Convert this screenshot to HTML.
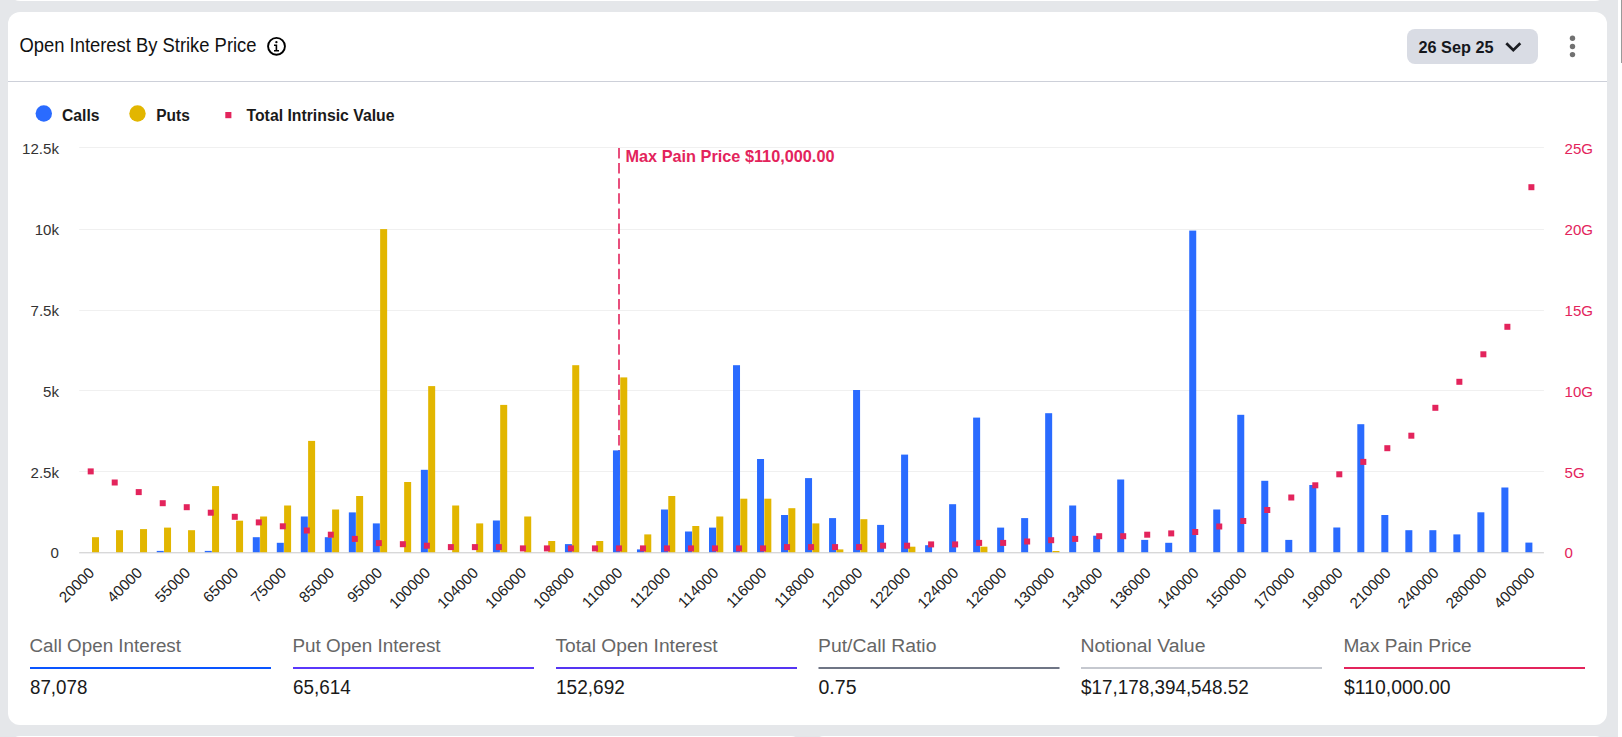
<!DOCTYPE html>
<html><head><meta charset="utf-8"><style>
html,body{margin:0;padding:0;width:1622px;height:737px;overflow:hidden;background:#e5e7ea;font-family:"Liberation Sans", sans-serif;}
.card{position:absolute;background:#fff;border-radius:12px;}
svg{position:absolute;left:0;top:0;}
</style></head><body>
<div class="card" style="left:8px;top:-40px;width:1599px;height:40.7px;"></div>
<div class="card" style="left:8px;top:11.5px;width:1599px;height:713px;"></div>
<div class="card" style="left:8px;top:735.6px;width:795px;height:60px;"></div>
<div class="card" style="left:812px;top:735.6px;width:795px;height:60px;"></div>
<div style="position:absolute;left:1618px;top:0;width:4px;height:737px;background:#fff;"></div>
<div style="position:absolute;left:1621px;top:0;width:1px;height:63px;background:#9a9a9a;"></div>
<svg width="1622" height="737" viewBox="0 0 1622 737">
<text x="19.5" y="51.8" font-family='"Liberation Sans", sans-serif' font-size="20" fill="#111" textLength="237" lengthAdjust="spacingAndGlyphs">Open Interest By Strike Price</text>
<circle cx="276.5" cy="46.3" r="8.45" fill="none" stroke="#000" stroke-width="1.9"/>
<circle cx="276.4" cy="42.2" r="1.15" fill="#000"/>
<path d="M274 45.3 H276.4 M276.4 44.6 V51 M274 50.8 H279" stroke="#000" stroke-width="1.6" fill="none"/>
<rect x="1407" y="29" width="131" height="35" rx="8" fill="#d9dce4"/>
<text x="1418.5" y="53" font-family='"Liberation Sans", sans-serif' font-weight="bold" font-size="16.7" fill="#15171c" textLength="75" lengthAdjust="spacingAndGlyphs">26 Sep 25</text>
<path d="M1506.3 43.2 L1513.3 50.2 L1520.3 43.2" stroke="#1b1d22" stroke-width="2.7" fill="none"/>
<circle cx="1572.5" cy="38.3" r="2.7" fill="#717171"/>
<circle cx="1572.5" cy="46.5" r="2.7" fill="#717171"/>
<circle cx="1572.5" cy="54.6" r="2.7" fill="#717171"/>
<rect x="8" y="81" width="1599" height="1" fill="#cdd0d9"/>
<circle cx="43.8" cy="113.5" r="8.2" fill="#2a6bff"/>
<text x="62" y="120.8" font-family='"Liberation Sans", sans-serif' font-weight="bold" font-size="17.2" fill="#1a1a1a" textLength="37.5" lengthAdjust="spacingAndGlyphs">Calls</text>
<circle cx="137.5" cy="113.5" r="8.2" fill="#e2b600"/>
<text x="156.3" y="120.8" font-family='"Liberation Sans", sans-serif' font-weight="bold" font-size="17.2" fill="#1a1a1a" textLength="33.5" lengthAdjust="spacingAndGlyphs">Puts</text>
<rect x="225.3" y="112" width="6.1" height="6.2" fill="#e3245c"/>
<text x="246.5" y="120.8" font-family='"Liberation Sans", sans-serif' font-weight="bold" font-size="17.2" fill="#1a1a1a" textLength="148" lengthAdjust="spacingAndGlyphs">Total Intrinsic Value</text>
<rect x="79.2" y="147" width="1464.7" height="1" fill="#f0f0f0"/>
<rect x="79.2" y="229" width="1464.7" height="1" fill="#f0f0f0"/>
<rect x="79.2" y="310" width="1464.7" height="1" fill="#f0f0f0"/>
<rect x="79.2" y="390" width="1464.7" height="1" fill="#f0f0f0"/>
<rect x="79.2" y="471" width="1464.7" height="1" fill="#f0f0f0"/>
<rect x="79.2" y="552" width="1464.7" height="1" fill="#d8d8d8"/>
<rect x="79.2" y="553" width="1464.7" height="1" fill="#efeff1"/>
<line x1="619" y1="148" x2="619" y2="552" stroke="#e3245c" stroke-width="1.6" stroke-dasharray="10.5 4.6"/>
<rect x="156.74" y="550.9" width="7.0" height="1.3" fill="#2a6bff"/>
<rect x="204.76" y="550.9" width="7.0" height="1.3" fill="#2a6bff"/>
<rect x="252.79" y="537.2" width="7.0" height="15.0" fill="#2a6bff"/>
<rect x="276.80" y="542.8" width="7.0" height="9.4" fill="#2a6bff"/>
<rect x="300.81" y="516.5" width="7.0" height="35.7" fill="#2a6bff"/>
<rect x="324.82" y="537.2" width="7.0" height="15.0" fill="#2a6bff"/>
<rect x="348.83" y="512.4" width="7.0" height="39.8" fill="#2a6bff"/>
<rect x="372.84" y="523.4" width="7.0" height="28.8" fill="#2a6bff"/>
<rect x="420.87" y="469.8" width="7.0" height="82.4" fill="#2a6bff"/>
<rect x="492.90" y="520.5" width="7.0" height="31.7" fill="#2a6bff"/>
<rect x="564.94" y="544.1" width="7.0" height="8.1" fill="#2a6bff"/>
<rect x="612.96" y="450.4" width="7.0" height="101.8" fill="#2a6bff"/>
<rect x="636.97" y="549.4" width="7.0" height="2.8" fill="#2a6bff"/>
<rect x="660.98" y="509.5" width="7.0" height="42.7" fill="#2a6bff"/>
<rect x="684.99" y="531.5" width="7.0" height="20.7" fill="#2a6bff"/>
<rect x="709.00" y="527.6" width="7.0" height="24.6" fill="#2a6bff"/>
<rect x="733.02" y="365.2" width="7.0" height="187.0" fill="#2a6bff"/>
<rect x="757.03" y="459.0" width="7.0" height="93.2" fill="#2a6bff"/>
<rect x="781.04" y="515.0" width="7.0" height="37.2" fill="#2a6bff"/>
<rect x="805.05" y="478.1" width="7.0" height="74.1" fill="#2a6bff"/>
<rect x="829.06" y="518.1" width="7.0" height="34.1" fill="#2a6bff"/>
<rect x="853.07" y="390.0" width="7.0" height="162.2" fill="#2a6bff"/>
<rect x="877.08" y="524.9" width="7.0" height="27.3" fill="#2a6bff"/>
<rect x="901.10" y="454.6" width="7.0" height="97.6" fill="#2a6bff"/>
<rect x="925.11" y="545.2" width="7.0" height="7.0" fill="#2a6bff"/>
<rect x="949.12" y="504.2" width="7.0" height="48.0" fill="#2a6bff"/>
<rect x="973.13" y="417.6" width="7.0" height="134.6" fill="#2a6bff"/>
<rect x="997.14" y="527.6" width="7.0" height="24.6" fill="#2a6bff"/>
<rect x="1021.15" y="518.1" width="7.0" height="34.1" fill="#2a6bff"/>
<rect x="1045.16" y="413.2" width="7.0" height="139.0" fill="#2a6bff"/>
<rect x="1069.18" y="505.5" width="7.0" height="46.7" fill="#2a6bff"/>
<rect x="1093.19" y="535.7" width="7.0" height="16.5" fill="#2a6bff"/>
<rect x="1117.20" y="479.5" width="7.0" height="72.7" fill="#2a6bff"/>
<rect x="1141.21" y="539.9" width="7.0" height="12.3" fill="#2a6bff"/>
<rect x="1165.22" y="542.8" width="7.0" height="9.4" fill="#2a6bff"/>
<rect x="1189.23" y="230.6" width="7.0" height="321.6" fill="#2a6bff"/>
<rect x="1213.25" y="509.5" width="7.0" height="42.7" fill="#2a6bff"/>
<rect x="1237.26" y="414.8" width="7.0" height="137.4" fill="#2a6bff"/>
<rect x="1261.27" y="480.8" width="7.0" height="71.4" fill="#2a6bff"/>
<rect x="1285.28" y="539.9" width="7.0" height="12.3" fill="#2a6bff"/>
<rect x="1309.29" y="485.0" width="7.0" height="67.2" fill="#2a6bff"/>
<rect x="1333.30" y="527.5" width="7.0" height="24.7" fill="#2a6bff"/>
<rect x="1357.31" y="424.2" width="7.0" height="128.0" fill="#2a6bff"/>
<rect x="1381.33" y="515.0" width="7.0" height="37.2" fill="#2a6bff"/>
<rect x="1405.34" y="530.2" width="7.0" height="22.0" fill="#2a6bff"/>
<rect x="1429.35" y="530.2" width="7.0" height="22.0" fill="#2a6bff"/>
<rect x="1453.36" y="534.4" width="7.0" height="17.8" fill="#2a6bff"/>
<rect x="1477.37" y="512.3" width="7.0" height="39.9" fill="#2a6bff"/>
<rect x="1501.38" y="487.5" width="7.0" height="64.7" fill="#2a6bff"/>
<rect x="1525.39" y="542.6" width="7.0" height="9.6" fill="#2a6bff"/>
<rect x="92.01" y="537.2" width="7.0" height="15.0" fill="#e2b600"/>
<rect x="116.02" y="530.2" width="7.0" height="22.0" fill="#e2b600"/>
<rect x="140.03" y="529.1" width="7.0" height="23.1" fill="#e2b600"/>
<rect x="164.04" y="527.6" width="7.0" height="24.6" fill="#e2b600"/>
<rect x="188.05" y="530.2" width="7.0" height="22.0" fill="#e2b600"/>
<rect x="212.06" y="486.1" width="7.0" height="66.1" fill="#e2b600"/>
<rect x="236.07" y="520.7" width="7.0" height="31.5" fill="#e2b600"/>
<rect x="260.09" y="516.5" width="7.0" height="35.7" fill="#e2b600"/>
<rect x="284.10" y="505.5" width="7.0" height="46.7" fill="#e2b600"/>
<rect x="308.11" y="440.9" width="7.0" height="111.3" fill="#e2b600"/>
<rect x="332.12" y="509.5" width="7.0" height="42.7" fill="#e2b600"/>
<rect x="356.13" y="496.0" width="7.0" height="56.2" fill="#e2b600"/>
<rect x="380.14" y="229.1" width="7.0" height="323.1" fill="#e2b600"/>
<rect x="404.15" y="482.0" width="7.0" height="70.2" fill="#e2b600"/>
<rect x="428.17" y="386.1" width="7.0" height="166.1" fill="#e2b600"/>
<rect x="452.18" y="505.5" width="7.0" height="46.7" fill="#e2b600"/>
<rect x="476.19" y="523.4" width="7.0" height="28.8" fill="#e2b600"/>
<rect x="500.20" y="404.9" width="7.0" height="147.3" fill="#e2b600"/>
<rect x="524.21" y="516.5" width="7.0" height="35.7" fill="#e2b600"/>
<rect x="548.22" y="541.0" width="7.0" height="11.2" fill="#e2b600"/>
<rect x="572.24" y="365.2" width="7.0" height="187.0" fill="#e2b600"/>
<rect x="596.25" y="541.0" width="7.0" height="11.2" fill="#e2b600"/>
<rect x="620.26" y="377.4" width="7.0" height="174.8" fill="#e2b600"/>
<rect x="644.27" y="534.4" width="7.0" height="17.8" fill="#e2b600"/>
<rect x="668.28" y="496.0" width="7.0" height="56.2" fill="#e2b600"/>
<rect x="692.29" y="526.0" width="7.0" height="26.2" fill="#e2b600"/>
<rect x="716.30" y="516.5" width="7.0" height="35.7" fill="#e2b600"/>
<rect x="740.32" y="498.7" width="7.0" height="53.5" fill="#e2b600"/>
<rect x="764.33" y="498.7" width="7.0" height="53.5" fill="#e2b600"/>
<rect x="788.34" y="508.2" width="7.0" height="44.0" fill="#e2b600"/>
<rect x="812.35" y="523.4" width="7.0" height="28.8" fill="#e2b600"/>
<rect x="836.36" y="549.4" width="7.0" height="2.8" fill="#e2b600"/>
<rect x="860.37" y="519.2" width="7.0" height="33.0" fill="#e2b600"/>
<rect x="908.40" y="546.7" width="7.0" height="5.5" fill="#e2b600"/>
<rect x="980.43" y="546.7" width="7.0" height="5.5" fill="#e2b600"/>
<rect x="1052.46" y="551.0" width="7.0" height="1.2" fill="#e2b600"/>
<rect x="87.71" y="468.4" width="6" height="6" fill="#e3245c"/>
<rect x="111.72" y="479.5" width="6" height="6" fill="#e3245c"/>
<rect x="135.73" y="489.1" width="6" height="6" fill="#e3245c"/>
<rect x="159.74" y="500.2" width="6" height="6" fill="#e3245c"/>
<rect x="183.75" y="504.2" width="6" height="6" fill="#e3245c"/>
<rect x="207.76" y="509.7" width="6" height="6" fill="#e3245c"/>
<rect x="231.77" y="513.8" width="6" height="6" fill="#e3245c"/>
<rect x="255.79" y="519.4" width="6" height="6" fill="#e3245c"/>
<rect x="279.80" y="523.3" width="6" height="6" fill="#e3245c"/>
<rect x="303.81" y="527.5" width="6" height="6" fill="#e3245c"/>
<rect x="327.82" y="531.7" width="6" height="6" fill="#e3245c"/>
<rect x="351.83" y="535.9" width="6" height="6" fill="#e3245c"/>
<rect x="375.84" y="540.1" width="6" height="6" fill="#e3245c"/>
<rect x="399.85" y="541.2" width="6" height="6" fill="#e3245c"/>
<rect x="423.87" y="542.7" width="6" height="6" fill="#e3245c"/>
<rect x="447.88" y="544.1" width="6" height="6" fill="#e3245c"/>
<rect x="471.89" y="544.1" width="6" height="6" fill="#e3245c"/>
<rect x="495.90" y="544.1" width="6" height="6" fill="#e3245c"/>
<rect x="519.91" y="545.4" width="6" height="6" fill="#e3245c"/>
<rect x="543.92" y="545.4" width="6" height="6" fill="#e3245c"/>
<rect x="567.94" y="545.4" width="6" height="6" fill="#e3245c"/>
<rect x="591.95" y="545.4" width="6" height="6" fill="#e3245c"/>
<rect x="615.96" y="545.4" width="6" height="6" fill="#e3245c"/>
<rect x="639.97" y="545.4" width="6" height="6" fill="#e3245c"/>
<rect x="663.98" y="545.4" width="6" height="6" fill="#e3245c"/>
<rect x="687.99" y="545.4" width="6" height="6" fill="#e3245c"/>
<rect x="712.00" y="545.4" width="6" height="6" fill="#e3245c"/>
<rect x="736.02" y="545.4" width="6" height="6" fill="#e3245c"/>
<rect x="760.03" y="545.4" width="6" height="6" fill="#e3245c"/>
<rect x="784.04" y="544.1" width="6" height="6" fill="#e3245c"/>
<rect x="808.05" y="544.1" width="6" height="6" fill="#e3245c"/>
<rect x="832.06" y="544.1" width="6" height="6" fill="#e3245c"/>
<rect x="856.07" y="544.1" width="6" height="6" fill="#e3245c"/>
<rect x="880.08" y="542.7" width="6" height="6" fill="#e3245c"/>
<rect x="904.10" y="542.7" width="6" height="6" fill="#e3245c"/>
<rect x="928.11" y="541.4" width="6" height="6" fill="#e3245c"/>
<rect x="952.12" y="541.4" width="6" height="6" fill="#e3245c"/>
<rect x="976.13" y="539.9" width="6" height="6" fill="#e3245c"/>
<rect x="1000.14" y="539.9" width="6" height="6" fill="#e3245c"/>
<rect x="1024.15" y="538.5" width="6" height="6" fill="#e3245c"/>
<rect x="1048.16" y="537.2" width="6" height="6" fill="#e3245c"/>
<rect x="1072.18" y="535.9" width="6" height="6" fill="#e3245c"/>
<rect x="1096.19" y="533.2" width="6" height="6" fill="#e3245c"/>
<rect x="1120.20" y="533.2" width="6" height="6" fill="#e3245c"/>
<rect x="1144.21" y="531.7" width="6" height="6" fill="#e3245c"/>
<rect x="1168.22" y="530.4" width="6" height="6" fill="#e3245c"/>
<rect x="1192.23" y="529.0" width="6" height="6" fill="#e3245c"/>
<rect x="1216.25" y="523.5" width="6" height="6" fill="#e3245c"/>
<rect x="1240.26" y="518.0" width="6" height="6" fill="#e3245c"/>
<rect x="1264.27" y="507.0" width="6" height="6" fill="#e3245c"/>
<rect x="1288.28" y="494.5" width="6" height="6" fill="#e3245c"/>
<rect x="1312.29" y="482.3" width="6" height="6" fill="#e3245c"/>
<rect x="1336.30" y="471.3" width="6" height="6" fill="#e3245c"/>
<rect x="1360.31" y="458.9" width="6" height="6" fill="#e3245c"/>
<rect x="1384.33" y="445.2" width="6" height="6" fill="#e3245c"/>
<rect x="1408.34" y="432.7" width="6" height="6" fill="#e3245c"/>
<rect x="1432.35" y="404.8" width="6" height="6" fill="#e3245c"/>
<rect x="1456.36" y="378.8" width="6" height="6" fill="#e3245c"/>
<rect x="1480.37" y="351.3" width="6" height="6" fill="#e3245c"/>
<rect x="1504.38" y="323.8" width="6" height="6" fill="#e3245c"/>
<rect x="1528.39" y="184.2" width="6" height="6" fill="#e3245c"/>
<text x="625.5" y="162" font-family='"Liberation Sans", sans-serif' font-weight="bold" font-size="16.7" fill="#e3245c" textLength="209" lengthAdjust="spacingAndGlyphs">Max Pain Price $110,000.00</text>
<text transform="translate(59,154.1) scale(0.98,1)" text-anchor="end" font-family='"Liberation Sans", sans-serif' font-size="15.4" fill="#333">12.5k</text>
<text transform="translate(59,235.1) scale(0.98,1)" text-anchor="end" font-family='"Liberation Sans", sans-serif' font-size="15.4" fill="#333">10k</text>
<text transform="translate(59,316.1) scale(0.98,1)" text-anchor="end" font-family='"Liberation Sans", sans-serif' font-size="15.4" fill="#333">7.5k</text>
<text transform="translate(59,397.1) scale(0.98,1)" text-anchor="end" font-family='"Liberation Sans", sans-serif' font-size="15.4" fill="#333">5k</text>
<text transform="translate(59,478.1) scale(0.98,1)" text-anchor="end" font-family='"Liberation Sans", sans-serif' font-size="15.4" fill="#333">2.5k</text>
<text transform="translate(59,558.1) scale(0.98,1)" text-anchor="end" font-family='"Liberation Sans", sans-serif' font-size="15.4" fill="#333">0</text>
<text transform="translate(1564.5,154.1) scale(0.98,1)" font-family='"Liberation Sans", sans-serif' font-size="15.4" fill="#e3245c">25G</text>
<text transform="translate(1564.5,235.1) scale(0.98,1)" font-family='"Liberation Sans", sans-serif' font-size="15.4" fill="#e3245c">20G</text>
<text transform="translate(1564.5,316.1) scale(0.98,1)" font-family='"Liberation Sans", sans-serif' font-size="15.4" fill="#e3245c">15G</text>
<text transform="translate(1564.5,397.1) scale(0.98,1)" font-family='"Liberation Sans", sans-serif' font-size="15.4" fill="#e3245c">10G</text>
<text transform="translate(1564.5,478.1) scale(0.98,1)" font-family='"Liberation Sans", sans-serif' font-size="15.4" fill="#e3245c">5G</text>
<text transform="translate(1564.5,558.1) scale(0.98,1)" font-family='"Liberation Sans", sans-serif' font-size="15.4" fill="#e3245c">0</text>
<text transform="translate(95.11,573.7) rotate(-45)" text-anchor="end" font-family='"Liberation Sans", sans-serif' font-size="15.2" fill="#222">20000</text>
<text transform="translate(143.13,573.7) rotate(-45)" text-anchor="end" font-family='"Liberation Sans", sans-serif' font-size="15.2" fill="#222">40000</text>
<text transform="translate(191.15,573.7) rotate(-45)" text-anchor="end" font-family='"Liberation Sans", sans-serif' font-size="15.2" fill="#222">55000</text>
<text transform="translate(239.17,573.7) rotate(-45)" text-anchor="end" font-family='"Liberation Sans", sans-serif' font-size="15.2" fill="#222">65000</text>
<text transform="translate(287.20,573.7) rotate(-45)" text-anchor="end" font-family='"Liberation Sans", sans-serif' font-size="15.2" fill="#222">75000</text>
<text transform="translate(335.22,573.7) rotate(-45)" text-anchor="end" font-family='"Liberation Sans", sans-serif' font-size="15.2" fill="#222">85000</text>
<text transform="translate(383.24,573.7) rotate(-45)" text-anchor="end" font-family='"Liberation Sans", sans-serif' font-size="15.2" fill="#222">95000</text>
<text transform="translate(431.27,573.7) rotate(-45)" text-anchor="end" font-family='"Liberation Sans", sans-serif' font-size="15.2" fill="#222">100000</text>
<text transform="translate(479.29,573.7) rotate(-45)" text-anchor="end" font-family='"Liberation Sans", sans-serif' font-size="15.2" fill="#222">104000</text>
<text transform="translate(527.31,573.7) rotate(-45)" text-anchor="end" font-family='"Liberation Sans", sans-serif' font-size="15.2" fill="#222">106000</text>
<text transform="translate(575.34,573.7) rotate(-45)" text-anchor="end" font-family='"Liberation Sans", sans-serif' font-size="15.2" fill="#222">108000</text>
<text transform="translate(623.36,573.7) rotate(-45)" text-anchor="end" font-family='"Liberation Sans", sans-serif' font-size="15.2" fill="#222">110000</text>
<text transform="translate(671.38,573.7) rotate(-45)" text-anchor="end" font-family='"Liberation Sans", sans-serif' font-size="15.2" fill="#222">112000</text>
<text transform="translate(719.40,573.7) rotate(-45)" text-anchor="end" font-family='"Liberation Sans", sans-serif' font-size="15.2" fill="#222">114000</text>
<text transform="translate(767.43,573.7) rotate(-45)" text-anchor="end" font-family='"Liberation Sans", sans-serif' font-size="15.2" fill="#222">116000</text>
<text transform="translate(815.45,573.7) rotate(-45)" text-anchor="end" font-family='"Liberation Sans", sans-serif' font-size="15.2" fill="#222">118000</text>
<text transform="translate(863.47,573.7) rotate(-45)" text-anchor="end" font-family='"Liberation Sans", sans-serif' font-size="15.2" fill="#222">120000</text>
<text transform="translate(911.50,573.7) rotate(-45)" text-anchor="end" font-family='"Liberation Sans", sans-serif' font-size="15.2" fill="#222">122000</text>
<text transform="translate(959.52,573.7) rotate(-45)" text-anchor="end" font-family='"Liberation Sans", sans-serif' font-size="15.2" fill="#222">124000</text>
<text transform="translate(1007.54,573.7) rotate(-45)" text-anchor="end" font-family='"Liberation Sans", sans-serif' font-size="15.2" fill="#222">126000</text>
<text transform="translate(1055.56,573.7) rotate(-45)" text-anchor="end" font-family='"Liberation Sans", sans-serif' font-size="15.2" fill="#222">130000</text>
<text transform="translate(1103.59,573.7) rotate(-45)" text-anchor="end" font-family='"Liberation Sans", sans-serif' font-size="15.2" fill="#222">134000</text>
<text transform="translate(1151.61,573.7) rotate(-45)" text-anchor="end" font-family='"Liberation Sans", sans-serif' font-size="15.2" fill="#222">136000</text>
<text transform="translate(1199.63,573.7) rotate(-45)" text-anchor="end" font-family='"Liberation Sans", sans-serif' font-size="15.2" fill="#222">140000</text>
<text transform="translate(1247.66,573.7) rotate(-45)" text-anchor="end" font-family='"Liberation Sans", sans-serif' font-size="15.2" fill="#222">150000</text>
<text transform="translate(1295.68,573.7) rotate(-45)" text-anchor="end" font-family='"Liberation Sans", sans-serif' font-size="15.2" fill="#222">170000</text>
<text transform="translate(1343.70,573.7) rotate(-45)" text-anchor="end" font-family='"Liberation Sans", sans-serif' font-size="15.2" fill="#222">190000</text>
<text transform="translate(1391.73,573.7) rotate(-45)" text-anchor="end" font-family='"Liberation Sans", sans-serif' font-size="15.2" fill="#222">210000</text>
<text transform="translate(1439.75,573.7) rotate(-45)" text-anchor="end" font-family='"Liberation Sans", sans-serif' font-size="15.2" fill="#222">240000</text>
<text transform="translate(1487.77,573.7) rotate(-45)" text-anchor="end" font-family='"Liberation Sans", sans-serif' font-size="15.2" fill="#222">280000</text>
<text transform="translate(1535.79,573.7) rotate(-45)" text-anchor="end" font-family='"Liberation Sans", sans-serif' font-size="15.2" fill="#222">400000</text>
<text x="29.5" y="651.8" font-family='"Liberation Sans", sans-serif' font-size="19.2" fill="#666" textLength="151.5" lengthAdjust="spacingAndGlyphs">Call Open Interest</text>
<rect x="30" y="667" width="241" height="2" fill="#0a55ff"/>
<text x="30" y="693.5" font-family='"Liberation Sans", sans-serif' font-size="20" fill="#1a1a1a" textLength="57.3" lengthAdjust="spacingAndGlyphs">87,078</text>
<text x="292.5" y="651.8" font-family='"Liberation Sans", sans-serif' font-size="19.2" fill="#666" textLength="148.10000000000002" lengthAdjust="spacingAndGlyphs">Put Open Interest</text>
<rect x="293" y="667" width="241" height="2" fill="#5a38fb"/>
<text x="293" y="693.5" font-family='"Liberation Sans", sans-serif' font-size="20" fill="#1a1a1a" textLength="57.7" lengthAdjust="spacingAndGlyphs">65,614</text>
<text x="555.5" y="651.8" font-family='"Liberation Sans", sans-serif' font-size="19.2" fill="#666" textLength="162.10000000000002" lengthAdjust="spacingAndGlyphs">Total Open Interest</text>
<rect x="556" y="667" width="241" height="2" fill="#5535f2"/>
<text x="556" y="693.5" font-family='"Liberation Sans", sans-serif' font-size="20" fill="#1a1a1a" textLength="68.8" lengthAdjust="spacingAndGlyphs">152,692</text>
<text x="818.0" y="651.8" font-family='"Liberation Sans", sans-serif' font-size="19.2" fill="#666" textLength="118.39999999999999" lengthAdjust="spacingAndGlyphs">Put/Call Ratio</text>
<rect x="818.5" y="667" width="241" height="2" fill="#6f7585"/>
<text x="818.5" y="693.5" font-family='"Liberation Sans", sans-serif' font-size="20" fill="#1a1a1a" textLength="38" lengthAdjust="spacingAndGlyphs">0.75</text>
<text x="1080.5" y="651.8" font-family='"Liberation Sans", sans-serif' font-size="19.2" fill="#666" textLength="125.0" lengthAdjust="spacingAndGlyphs">Notional Value</text>
<rect x="1081" y="667" width="241" height="2" fill="#c5c8cf"/>
<text x="1081" y="693.5" font-family='"Liberation Sans", sans-serif' font-size="20" fill="#1a1a1a" textLength="167.8" lengthAdjust="spacingAndGlyphs">$17,178,394,548.52</text>
<text x="1343.5" y="651.8" font-family='"Liberation Sans", sans-serif' font-size="19.2" fill="#666" textLength="128.1" lengthAdjust="spacingAndGlyphs">Max Pain Price</text>
<rect x="1344" y="667" width="241" height="2" fill="#e3245c"/>
<text x="1344" y="693.5" font-family='"Liberation Sans", sans-serif' font-size="20" fill="#1a1a1a" textLength="106.5" lengthAdjust="spacingAndGlyphs">$110,000.00</text>
</svg>
</body></html>
